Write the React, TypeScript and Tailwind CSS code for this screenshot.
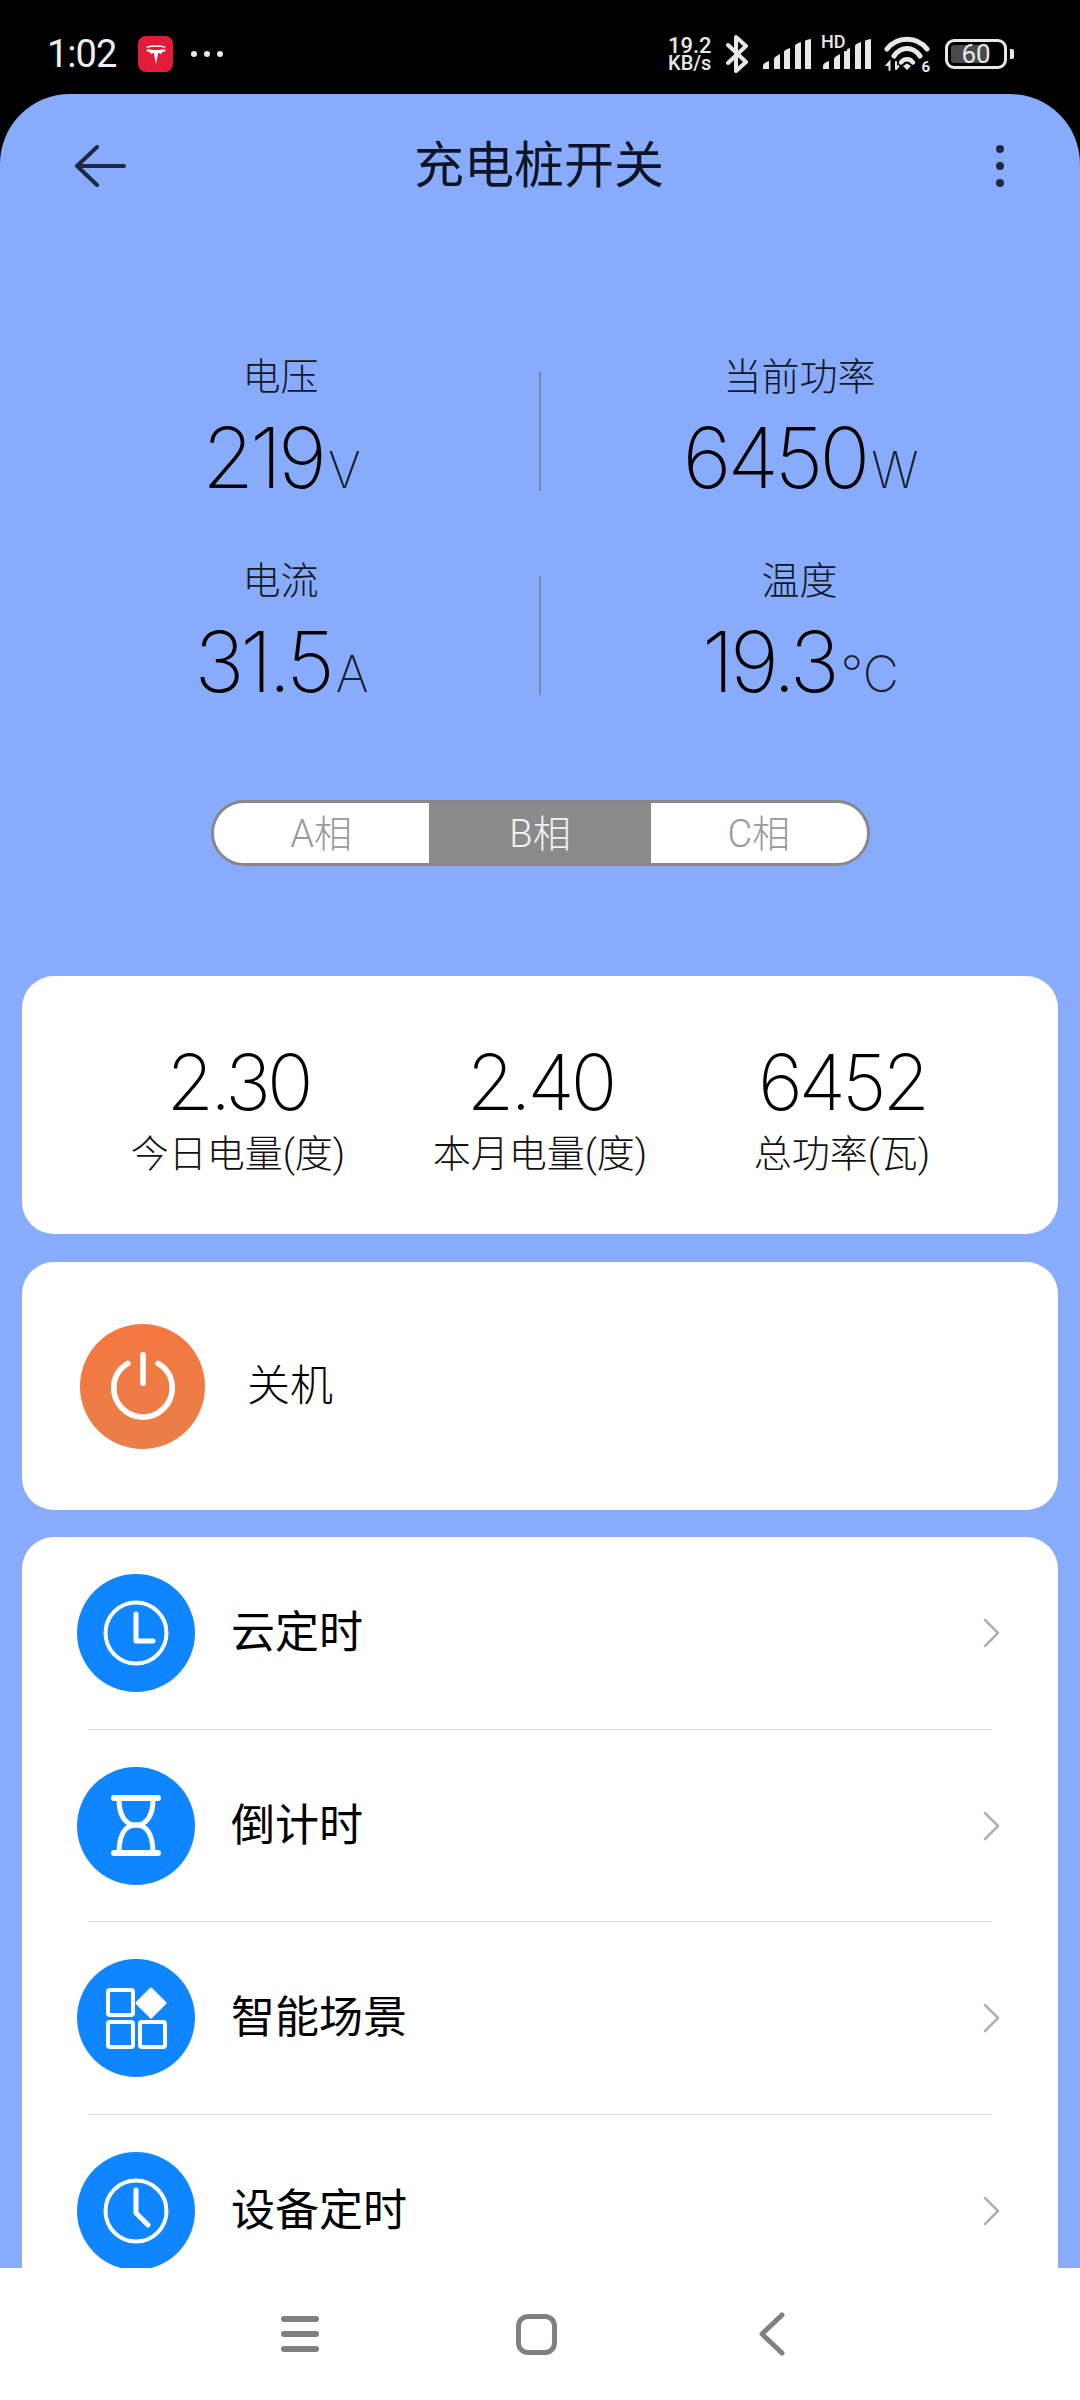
import type { ReactNode } from "react";

const cjk = "font-['Roboto','Noto_Sans_CJK_SC',sans-serif]";

function TeslaBadge() {
  return (
    <div className="w-[35px] h-[36px] rounded-[8px] bg-[#e31b3a] flex items-center justify-center">
      <svg width="24" height="24" viewBox="0 0 24 24" fill="#fff">
        <path d="M12 22 9.800 11c-1.300 0-2.100.5-2.600 1.500C6.800 10.500 5.200 9.600 2.500 9.200l.3-2C5.500 7.500 8 8 12 8s6.500-.5 9.200-.8l.3 2c-2.700.4-4.300 1.300-4.700 3.300-.5-1-1.300-1.500-2.600-1.500L12 22Z" />
        <path d="M2.500 4.500c6-1.800 13-1.800 19 0l-.5 1.300c-5.500-1.500-12.500-1.500-18 0L2.500 4.500Z" />
      </svg>
    </div>
  );
}

function SignalBars() {
  return (
    <svg width="48" height="32" viewBox="0 0 48 32" fill="#e8e8e8">
      <path d="M0 31v-3q0-3 6-5v8H0Z" />
      <path d="M11 31V21q0-2 6-5v15h-6Z" />
      <path d="M21 31V14q0-2 6-4v21h-6Z" />
      <path d="M32 31V8q0-2 6-4v27h-6Z" />
      <path d="M42 31V3q0-1 6-2v30h-6Z" />
    </svg>
  );
}

function StatusRight() {
  return (
    <div className="flex items-center">
      <div className="w-[46px] flex flex-col items-start text-[#e8e8e8] font-medium font-['Roboto',sans-serif]">
        <span className="text-[22px] leading-[19px]">19.2</span>
        <span className="text-[20px] leading-[17px]">KB/s</span>
      </div>
      <svg className="ml-[11px]" width="25" height="38" viewBox="0 0 25 38" fill="none" stroke="#e8e8e8" strokeWidth="4" strokeLinejoin="round" strokeLinecap="round">
        <path d="M3 10 21 27 11 36V2L21 11 3 28" />
      </svg>
      <div className="ml-[13px]">
        <SignalBars />
      </div>
      <div className="ml-[12px] relative">
        <SignalBars />
        <span className="absolute left-[-2px] top-[-5px] bg-black pr-[1px] text-[#e8e8e8] text-[18px] leading-[18px] font-medium font-['Roboto',sans-serif]">HD</span>
      </div>
      <div className="ml-[13px] relative w-[46px] h-[36px]">
        <svg width="46" height="36" viewBox="0 0 46 36" fill="none" stroke="#e8e8e8" strokeWidth="5" strokeLinecap="round">
          <path d="M3 13C13 0 33 0 43 13" />
          <path d="M10 20C17 10 29 10 36 20" />
          <path d="M17 26.500C20 22 26 22 29 26.500" strokeWidth="4.500" />
          <path d="M19 30 23 27.500 27 30 23 34Z" fill="#e8e8e8" stroke="none" />
          <path d="M5 29 3 29 5.500 26 5.500 34M12 33V26M12 33 14.500 30" strokeWidth="2" />
        </svg>
        <span className="absolute right-0 bottom-[-3px] text-[#e8e8e8] text-[15px] leading-[15px] font-bold font-['Roboto',sans-serif]">6</span>
      </div>
      <div className="ml-[15px] w-[62px] h-[30px] rounded-[9px] border-[3px] border-[#e8e8e8] p-[3px] relative">
        <div className="w-[36px] h-full rounded-[3px] bg-[#4a4a4a]" />
        <span className="absolute inset-0 flex items-center justify-center text-[26px] leading-none text-[#e8e8e8] font-['Roboto',sans-serif]">60</span>
      </div>
      <div className="ml-[3px] w-[4px] h-[10px] rounded-r-[2px] bg-[#e8e8e8]" />
    </div>
  );
}

function Stat({ label, value, unit }: { label: string; value: string; unit: string }) {
  return (
    <div className="flex-1 flex flex-col items-center">
      <div className="text-[38px] leading-[52px] font-light text-[#101828]">{label}</div>
      <div className="mt-[13px] h-[84px] flex items-baseline justify-center leading-[84px] text-black font-['Inter','Noto_Sans_CJK_SC',sans-serif]">
        <span className="text-[84px] font-extralight tracking-[-4px]">{value}</span>
        <span className="text-[50px] font-extralight ml-[5px] tracking-[-2px] text-[#1a2233]">{unit}</span>
      </div>
    </div>
  );
}

function StatRow({ children }: { children: ReactNode }) {
  return <div className="flex h-[142px]">{children}</div>;
}

function Divider() {
  return <div className="w-[2px] h-[119px] mt-[21px] bg-[#7788a8] shrink-0" />;
}

function Phase({ label, active }: { label: string; active?: boolean }) {
  return (
    <div
      className={
        active
          ? "w-[222px] pt-[3px] flex items-center justify-center bg-[#8a8a8a] text-[#f2f2f2] text-[38px] font-light"
          : "flex-1 pt-[3px] flex items-center justify-center bg-white text-[#9a9a9a] text-[38px] font-light"
      }
    >
      {label}
    </div>
  );
}

function Total({ value, label }: { value: string; label: string }) {
  return (
    <div className="flex flex-col items-center">
      <div className="text-[77px] leading-[80px] font-extralight tracking-[-4px] text-black font-['Inter',sans-serif]">{value}</div>
      <div className="text-[38px] leading-[52px] font-light text-[#111] mt-[6px]">{label}</div>
    </div>
  );
}

function Row({ label, icon, last }: { label: string; icon: ReactNode; last?: boolean }) {
  return (
    <div className="h-[192.5px] relative flex items-center pl-[55px] pr-[57px]">
      <div className="w-[118px] h-[118px] rounded-full bg-[#0f86ff] flex items-center justify-center shrink-0">{icon}</div>
      <div className="ml-[36px] flex-1 text-[44px] text-black">{label}</div>
      <svg width="20" height="32" viewBox="0 0 20 32" fill="none" stroke="#b0b0b0" strokeWidth="2.500" strokeLinecap="round" strokeLinejoin="round">
        <path d="M4 3 17 16 4 29" />
      </svg>
      {!last && <div className="absolute left-[66px] right-[66px] bottom-0 h-[1px] bg-[#dedede]" />}
    </div>
  );
}

const iconProps = {
  width: 118,
  height: 118,
  viewBox: "0 0 118 118",
  fill: "none",
  stroke: "#fff",
  strokeLinecap: "round" as const,
  strokeLinejoin: "round" as const,
};

export default function App() {
  return (
    <div className={`w-[1080px] h-[2400px] bg-black flex flex-col overflow-hidden ${cjk}`}>
      {/* status bar */}
      <div className="h-[94px] shrink-0 pt-[14px] pl-[47px] pr-[66px] flex items-center justify-between">
        <div className="flex items-center">
          <span className="text-[38px] leading-none tracking-[-1px] text-[#eee] w-[91px]">1:02</span>
          <TeslaBadge />
          <div className="ml-[18px] flex gap-[7px]">
            <div className="w-[6px] h-[6px] rounded-full bg-[#e8e8e8]" />
            <div className="w-[6px] h-[6px] rounded-full bg-[#e8e8e8]" />
            <div className="w-[6px] h-[6px] rounded-full bg-[#e8e8e8]" />
          </div>
        </div>
        <StatusRight />
      </div>

      <div className="flex-1 min-h-0 bg-[#88abfb] rounded-t-[70px] overflow-hidden flex flex-col">
        {/* header */}
        <div className="h-[142px] shrink-0 pt-[2px] pl-[74px] pr-[76px] flex items-center justify-between">
          <svg className="w-[52px]" width="52" height="42" viewBox="0 0 52 42" fill="none" stroke="#1e2a44" strokeWidth="4" strokeLinecap="round" strokeLinejoin="round">
            <path d="M50 21H3M23 2 3 21 23 40" />
          </svg>
          <div className="text-[50px] text-[#0d1424]">充电桩开关</div>
          <div className="w-[52px] flex flex-col items-end gap-[9px]">
            <div className="w-[8px] h-[8px] rounded-full bg-[#1e2a44]" />
            <div className="w-[8px] h-[8px] rounded-full bg-[#1e2a44]" />
            <div className="w-[8px] h-[8px] rounded-full bg-[#1e2a44]" />
          </div>
        </div>

        {/* readings */}
        <div className="mt-[115px] px-[22px] flex flex-col gap-[62px]">
          <StatRow>
            <Stat label="电压" value="219" unit="V" />
            <Divider />
            <Stat label="当前功率" value="6450" unit="W" />
          </StatRow>
          <StatRow>
            <Stat label="电流" value="31.5" unit="A" />
            <Divider />
            <Stat label="温度" value="19.3" unit="℃" />
          </StatRow>
        </div>

        {/* phase switch */}
        <div className="mt-[103px] mx-auto w-[659px] h-[66px] rounded-full border-[3px] border-[#888] overflow-hidden flex shrink-0">
          <Phase label="A相" />
          <Phase label="B相" active />
          <Phase label="C相" />
        </div>

        {/* totals */}
        <div className="mt-[110px] mx-[22px] h-[258px] shrink-0 rounded-[32px] bg-white grid grid-cols-3 px-[65px] pt-[66px]">
          <Total value="2.30" label="今日电量(度)" />
          <Total value="2.40" label="本月电量(度)" />
          <Total value="6452" label="总功率(瓦)" />
        </div>

        {/* power */}
        <div className="mt-[28px] mx-[22px] h-[248px] shrink-0 rounded-[32px] bg-white flex items-center pl-[58px]">
          <div className="w-[125px] h-[125px] rounded-full bg-linear-to-b from-[#f5773f] to-[#e97f49] flex items-center justify-center">
            <svg width="66" height="68" viewBox="0 0 70 72" fill="none" stroke="#fff" strokeWidth="6" strokeLinecap="round">
              <path d="M35 3V33" />
              <path d="M19 12C9 18 4 27 4 38 4 55 18 69 35 69S66 55 66 38C66 27 61 18 51 12" />
            </svg>
          </div>
          <div className="ml-[42px] text-[43px] font-light text-black">关机</div>
        </div>

        {/* menu */}
        <div className="mt-[27px] mx-[22px] flex-1 rounded-t-[32px] bg-white">
          <Row
            label="云定时"
            icon={
              <svg {...iconProps}>
                <circle cx="59" cy="59" r="30.500" strokeWidth="4" />
                <path d="M59 40V67H76" strokeWidth="5" />
              </svg>
            }
          />
          <Row
            label="倒计时"
            icon={
              <svg {...iconProps}>
                <path d="M37 31H81" strokeWidth="6" />
                <path d="M42 32C42 48 48 58 59 58 70 58 76 48 76 32" strokeWidth="5" />
                <path d="M42 86C42 68 48 58 59 58 70 58 76 68 76 86" strokeWidth="5" />
                <path d="M37 86H81" strokeWidth="6" />
              </svg>
            }
          />
          <Row
            label="智能场景"
            icon={
              <svg {...iconProps}>
                <rect x="31" y="31" width="25" height="25" rx="2" strokeWidth="4" />
                <rect x="31" y="63" width="25" height="25" rx="2" strokeWidth="4" />
                <rect x="63" y="63" width="25" height="25" rx="2" strokeWidth="4" />
                <path d="M74 30 88 44 74 58 60 44Z" fill="#fff" strokeWidth="3" />
              </svg>
            }
          />
          <Row
            label="设备定时"
            last
            icon={
              <svg {...iconProps}>
                <circle cx="59" cy="59" r="30.500" strokeWidth="4" />
                <path d="M59 38V61L71 73" strokeWidth="5" />
              </svg>
            }
          />
        </div>
      </div>

      {/* nav bar */}
      <div className="h-[132px] shrink-0 bg-white flex items-center pl-[281px]">
        <div className="flex flex-col gap-[9px]">
          <div className="w-[38px] h-[6px] rounded-full bg-[#808080]" />
          <div className="w-[38px] h-[6px] rounded-full bg-[#808080]" />
          <div className="w-[38px] h-[6px] rounded-full bg-[#808080]" />
        </div>
        <div className="ml-[197px] w-[41px] h-[41px] rounded-[12px] border-[5px] border-[#808080]" />
        <svg className="ml-[202px]" width="26" height="44" viewBox="0 0 26 44" fill="none" stroke="#808080" strokeWidth="5" strokeLinecap="round" strokeLinejoin="round">
          <path d="M23 3 3 22 23 41" />
        </svg>
      </div>
    </div>
  );
}
